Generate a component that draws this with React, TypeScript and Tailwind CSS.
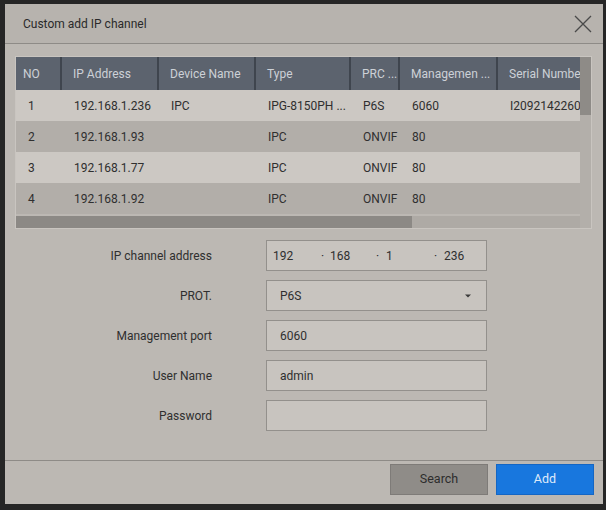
import React from 'react';

const columns = [
  { label: 'NO', width: 'w-[46px]' },
  { label: 'IP Address', width: 'w-[97px]' },
  { label: 'Device Name', width: 'w-[97px]' },
  { label: 'Type', width: 'w-[95px]' },
  { label: 'PRC ...', width: 'w-[49px]' },
  { label: 'Managemen ...', width: 'w-[98px]' },
  { label: 'Serial Number', width: 'w-[110px]' },
];

const rows = [
  ['1', '192.168.1.236', 'IPC', 'IPG-8150PH ...', 'P6S', '6060', 'I2092142260'],
  ['2', '192.168.1.93', '', 'IPC', 'ONVIF', '80', ''],
  ['3', '192.168.1.77', '', 'IPC', 'ONVIF', '80', ''],
  ['4', '192.168.1.92', '', 'IPC', 'ONVIF', '80', ''],
];

const FormRow = ({ label, children }: { label: string; children?: React.ReactNode }) => (
  <div className="flex items-center h-[31px]">
    <div className="w-[207px] text-right text-[12px] text-[#2f2f2f]">{label}</div>
    <div className="ml-[54px] w-[221px] h-[31px] border border-[#93908c] bg-[#c8c4bf] flex items-center px-[13px] text-[12px] text-[#2f2f2f]">
      {children}
    </div>
  </div>
);

const App: React.FC = () => {
  return (
    <div
      className="w-[606px] h-[510px] bg-[#262626] pt-[4px] pl-[5px] pr-[3px] pb-[6px]"
      style={{ fontFamily: 'Roboto, "Liberation Sans", Arial, sans-serif' }}
    >
      <div className="w-full h-full bg-[#bcb8b3] flex flex-col">
        {/* title bar */}
        <div className="h-[40px] flex items-center justify-between pl-[18px] pr-[10px] bg-[#b7b3ae] border-b border-[#8e8b87]">
          <span className="text-[12px] text-[#2a2a2a]">Custom add IP channel</span>
          <svg width="20" height="20" viewBox="0 0 20 20" className="text-[#4a4a4a]">
            <path d="M2 2 L18 18 M18 2 L2 18" stroke="currentColor" strokeWidth="1.3" fill="none" />
          </svg>
        </div>

        {/* table */}
        <div className="mt-[12px] ml-[10px] w-[577px] h-[173px] flex border border-[#c9c5c0]">
          <div className="flex-1 overflow-hidden flex flex-col">
            <div className="flex h-[33px] bg-[#5c636e] shrink-0">
              {columns.map((c, i) => (
                <div
                  key={c.label}
                  className={`${c.width} shrink-0 flex items-center text-[12px] text-[#cdd1d7] whitespace-nowrap overflow-hidden ${i === 0 ? 'pl-[7px]' : 'pl-[11px]'} ${i < columns.length - 1 ? 'border-r-2 border-[#3f454e]' : ''}`}
                >
                  {c.label}
                </div>
              ))}
            </div>
            {rows.map((r, ri) => (
              <div
                key={r[0]}
                className={`flex h-[31px] shrink-0 ${ri % 2 === 0 ? 'bg-[#ccc8c3]' : 'bg-[#b2aea9]'}`}
              >
                {r.map((cell, ci) => (
                  <div
                    key={ci}
                    className={`${columns[ci].width} shrink-0 flex items-center pl-[12px] text-[12px] text-[#2f2f2f] whitespace-nowrap overflow-hidden`}
                  >
                    {cell}
                  </div>
                ))}
              </div>
            ))}
            <div className="mt-[2px] h-[13px] bg-[#aeaaa5] flex">
              <div className="w-[396px] h-full bg-[#8c8985]" />
            </div>
          </div>
          {/* vertical scrollbar */}
          <div className="w-[11px] bg-[#b3afaa] flex flex-col">
            <div className="h-[58px] bg-[#8e8b87]" />
          </div>
        </div>

        {/* form */}
        <div className="mt-[11px] flex flex-col gap-[9px]">
          <FormRow label="IP channel address">
            <div className="flex items-center w-full -ml-[7px]">
              <span className="w-[48px]">192</span>
              <span className="w-[9px]">·</span>
              <span className="w-[46px]">168</span>
              <span className="w-[10px]">·</span>
              <span className="w-[48px]">1</span>
              <span className="w-[10px]">·</span>
              <span>236</span>
            </div>
          </FormRow>
          <FormRow label="PROT.">
            <div className="flex items-center justify-between w-full">
              <span>P6S</span>
              <svg width="8" height="6" viewBox="0 0 8 6" className="mr-[1px]">
                <path d="M1 1.5 L4 4.5 L7 1.5 Z" fill="#3a3a3a" />
              </svg>
            </div>
          </FormRow>
          <FormRow label="Management port">6060</FormRow>
          <FormRow label="User Name">admin</FormRow>
          <FormRow label="Password" />
        </div>

        {/* footer */}
        <div className="mt-[29px] border-t border-[#8e8b87] flex justify-end gap-[8px] pt-[3px] pr-[9px]">
          <button className="w-[98px] h-[31px] bg-[#8f8c88] border border-[#7e7b78] text-[12.5px] text-[#2d2d2d]">
            Search
          </button>
          <button className="w-[98px] h-[31px] bg-[#1877de] border border-[#1466c4] text-[12.5px] text-[#dfeafa]">
            Add
          </button>
        </div>
      </div>
    </div>
  );
};

export default App;
